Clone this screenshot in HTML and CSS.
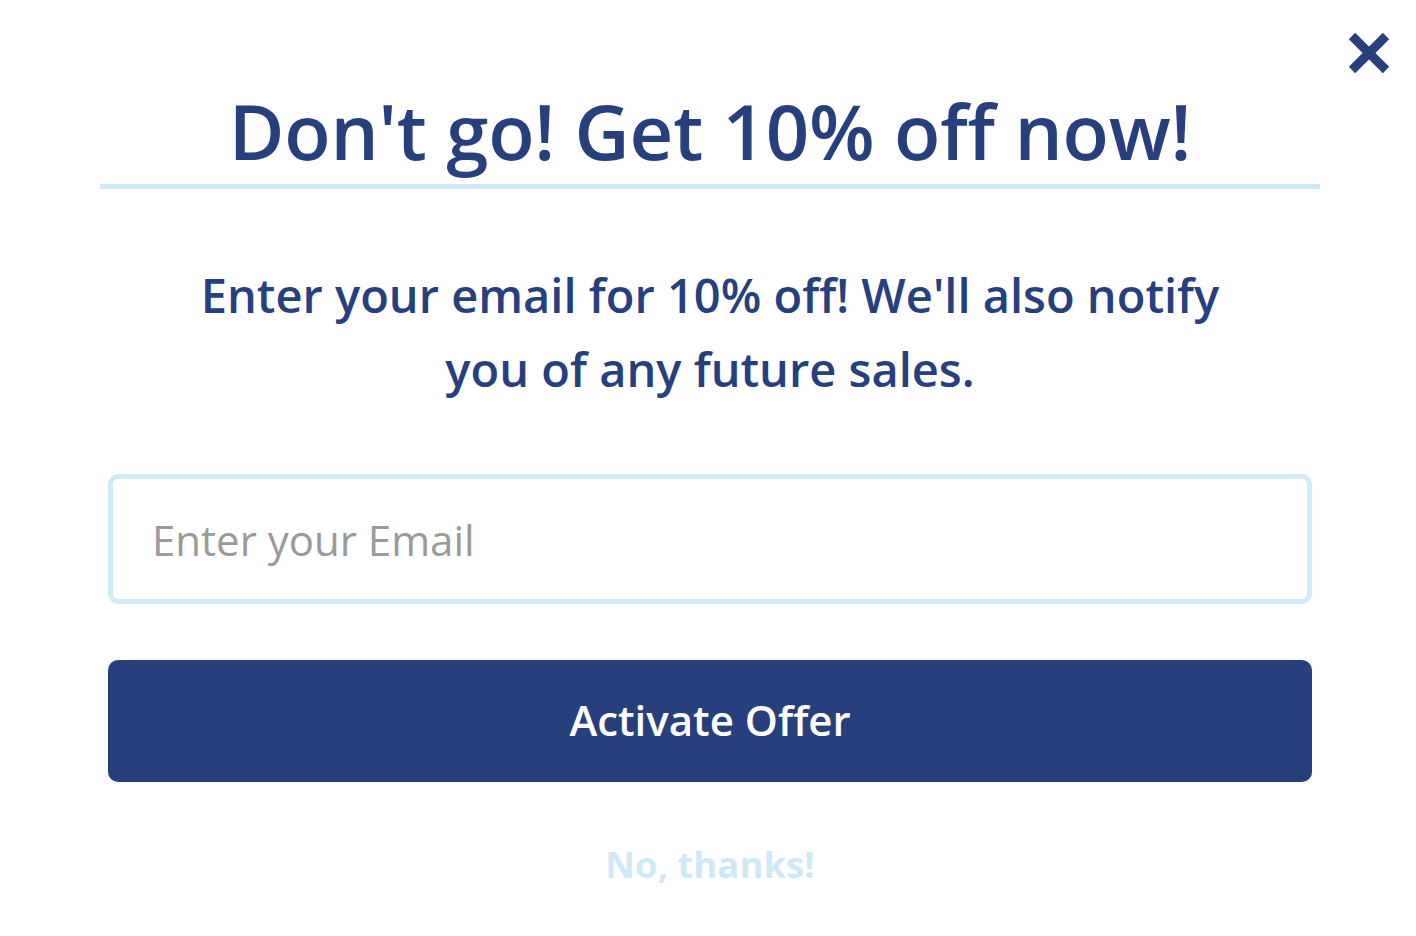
FILE: index.html
```html
<!DOCTYPE html>
<html>
<head>
<meta charset="utf-8">
<link rel="stylesheet" href="styles.css">
</head>
<body>
<div class="modal">
  <button class="close" aria-label="Close">
    <svg width="44" height="42" viewBox="0 0 44 42"><path d="M5 4 L39 38 M39 4 L5 38" stroke="#283f7e" stroke-width="9" stroke-linecap="butt" fill="none"/></svg>
  </button>
  <h1 class="title">Don't go! Get 10% off now!</h1>
  <p class="lead">Enter your email for 10% off! We'll also notify you of any future sales.</p>
  <form class="form">
    <input class="email" type="email" placeholder="Enter your Email">
    <button class="cta" type="button">Activate Offer</button>
  </form>
  <a class="decline" href="#">No, thanks!</a>
</div>
</body>
</html>
```
FILE: styles.css
```css
html, body {
  margin: 0;
  padding: 0;
  background: #fff;
}
body {
  font-family: "Open Sans", "Liberation Sans", sans-serif;
  color: #283f7e;
}
.modal {
  position: relative;
  width: 1416px;
  height: 936px;
  box-sizing: border-box;
  padding: 79px 96px 0 100px;
  display: flex;
  flex-direction: column;
  align-items: center;
}
.close {
  position: absolute;
  top: 32px;
  right: 25px;
  border: 0;
  background: none;
  padding: 0;
  width: 44px;
  height: 42px;
  cursor: pointer;
}
.close svg { display: block; }
.title {
  align-self: stretch;
  margin: 0;
  padding-bottom: 1px;
  font-size: 76px;
  font-weight: 600;
  line-height: 104px;
  text-align: center;
  border-bottom: 5px solid #cfe8f5;
  letter-spacing: -0.2px;
}
.lead {
  margin: 69px 0 0;
  width: 1060px;
  font-size: 47px;
  font-weight: 600;
  line-height: 74px;
  text-align: center;
}
.form {
  align-self: stretch;
  display: flex;
  flex-direction: column;
  padding: 0 8px;
  margin-top: 68px;
}
.email {
  height: 130px;
  box-sizing: border-box;
  border: 5px solid #d0eaf6;
  border-radius: 10px;
  padding: 0 39px;
  font-family: inherit;
  font-size: 42px;
  color: #333;
  outline: none;
}
.email::placeholder { color: #9a9a9a; }
.cta {
  margin-top: 56px;
  height: 122px;
  padding: 0 0 4px;
  border: 0;
  border-radius: 10px;
  background: #283f7e;
  color: #fff;
  font-family: inherit;
  font-size: 42px;
  font-weight: 600;
  cursor: pointer;
}
.decline {
  margin-top: 57px;
  font-size: 36.5px;
  font-weight: 700;
  color: #cfe8f5;
  text-decoration: none;
}
```
